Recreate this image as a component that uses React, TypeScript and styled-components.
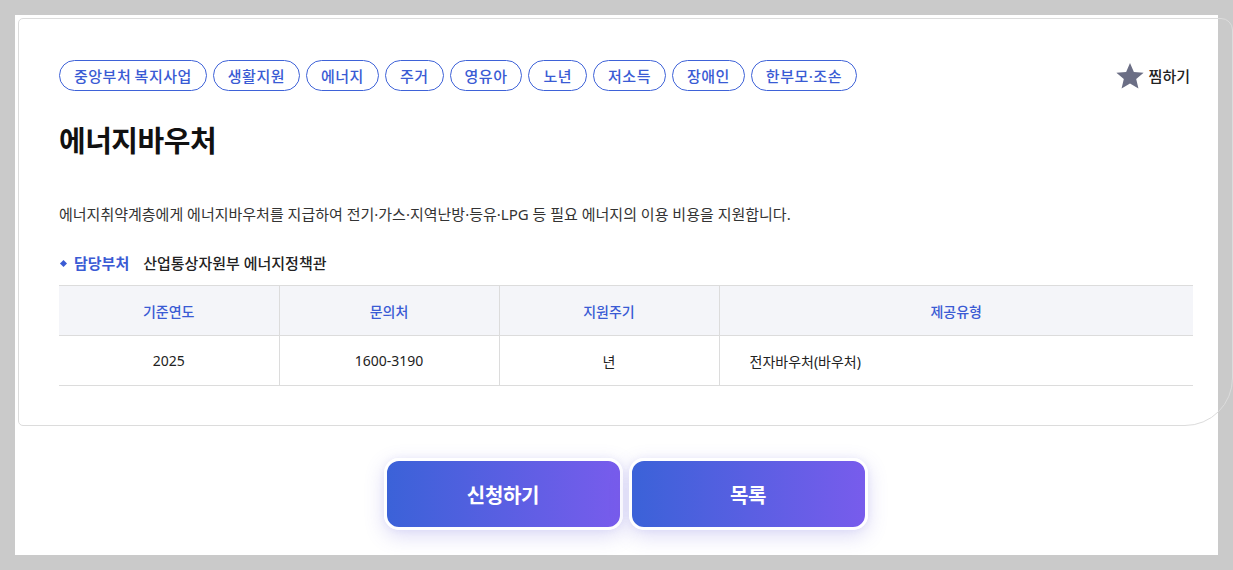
import React from "react";
import styled, { createGlobalStyle } from "styled-components";

const Global = createGlobalStyle`
  html, body { margin: 0; padding: 0; }
  body {
    background: #cacaca;
    font-family: "Noto Sans", "Noto Sans CJK KR", sans-serif;
    color: #222;
    overflow: hidden;
  }
`;

const Screen = styled.div`
  padding: 15px;
  width: 1233px;
  height: 570px;
  box-sizing: border-box;
`;

const Page = styled.div`
  width: 1203px;
  height: 540px;
  background: #fff;
  padding: 3px;
  box-sizing: border-box;
  display: flex;
  flex-direction: column;
`;

const Card = styled.section`
  width: 1215px;
  height: 408px;
  box-sizing: border-box;
  border: 1px solid #dcdcdc;
  border-radius: 5px 12px 48px 5px;
  padding: 41px 40px 0 40px;
  flex-shrink: 0;
`;

const TopRow = styled.div`
  display: flex;
  align-items: center;
  justify-content: space-between;
  width: 1134px;
`;

const Tags = styled.ul`
  display: flex;
  gap: 6px;
  margin: 0;
  padding: 0;
  list-style: none;
`;

const Tag = styled.li`
  height: 31px;
  box-sizing: border-box;
  border: 1px solid #3e62d8;
  border-radius: 16px;
  padding: 0 14px;
  display: flex;
  align-items: center;
  font-size: 15px;
  font-weight: 500;
  color: #3a5bd4;
  letter-spacing: 0.5px;
  word-spacing: -1px;
`;

const Wish = styled.button`
  display: flex;
  align-items: center;
  gap: 4px;
  border: none;
  background: none;
  padding: 0;
  margin-right: 3px;
  font-family: inherit;
  font-size: 15px;
  font-weight: 500;
  color: #222;
  cursor: pointer;
`;

const Title = styled.h1`
  margin: 30px 0 0;
  font-size: 29px;
  font-weight: 700;
  color: #111;
  letter-spacing: -0.5px;
  line-height: 40px;
`;

const Desc = styled.p`
  margin: 42px 0 0;
  font-size: 15px;
  color: #333;
  line-height: 22px;
  letter-spacing: 0;
`;

const Dept = styled.div`
  display: flex;
  align-items: center;
  margin-top: 27px;
  font-size: 15px;
  line-height: 22px;
`;

const DeptLabel = styled.span`
  display: flex;
  align-items: center;
  gap: 8px;
  font-weight: 700;
  color: #3a5bd4;
  margin-right: 14px;
  &::before {
    content: "";
    width: 5px;
    height: 5px;
    background: #3a5bd4;
    transform: rotate(45deg);
    margin-left: 2px;
  }
`;

const DeptValue = styled.span`
  font-weight: 500;
  color: #222;
`;

const Table = styled.table`
  margin-top: 11px;
  width: 1134px;
  border-collapse: collapse;
  table-layout: fixed;
  font-size: 14px;
`;

const Col = styled.col<{ $w?: number }>`
  width: ${(p) => (p.$w ? `${p.$w}px` : "auto")};
`;

const Th = styled.th`
  padding: 0;
  height: 49px;
  background: #f4f5f9;
  color: #3a5bd4;
  font-weight: 500;
  border-top: 1px solid #dcdcdc;
  border-bottom: 1px solid #dcdcdc;
  border-right: 1px solid #dcdcdc;
  &:last-child { border-right: none; }
`;

const Td = styled.td<{ $left?: boolean }>`
  height: 49px;
  text-align: ${(p) => (p.$left ? "left" : "center")};
  padding: ${(p) => (p.$left ? "0 0 0 30px" : "0")};
  color: #222;
  font-weight: 400;
  border-bottom: 1px solid #dcdcdc;
  border-right: 1px solid #dcdcdc;
  &:last-child { border-right: none; }
`;

const Actions = styled.div`
  width: 1215px;
  display: flex;
  justify-content: center;
  gap: 6px;
  margin-top: 32px;
`;

const Action = styled.button`
  width: 239px;
  height: 72px;
  box-sizing: border-box;
  border: 3px solid #fff;
  border-radius: 15px;
  background: linear-gradient(90deg, #3b62d8 0%, #785cec 100%);
  box-shadow: 0 6px 20px rgba(95, 85, 215, 0.22), 0 0 6px rgba(95, 85, 215, 0.08);
  color: #fff;
  font-family: inherit;
  font-size: 20px;
  font-weight: 700;
  letter-spacing: -0.3px;
  cursor: pointer;
`;

const StarIcon = () => (
  <svg width="30" height="30" viewBox="0 0 24 24" aria-hidden="true">
    <path
      d="M12 1.5l3.1 7.2 7.8.65-5.95 5.1 1.8 7.6L12 18l-6.75 4.05 1.8-7.6L1.1 9.35l7.8-.65z"
      fill="#6b6e85"
    />
  </svg>
);

const tags = ["중앙부처 복지사업", "생활지원", "에너지", "주거", "영유아", "노년", "저소득", "장애인", "한부모·조손"];

export default function App() {
  return (
    <>
      <Global />
      <Screen>
        <Page>
          <Card>
            <TopRow>
              <Tags>
                {tags.map((t) => (
                  <Tag key={t}>{t}</Tag>
                ))}
              </Tags>
              <Wish>
                <StarIcon />
                찜하기
              </Wish>
            </TopRow>
            <Title>에너지바우처</Title>
            <Desc>
              에너지취약계층에게 에너지바우처를 지급하여 전기·가스·지역난방·등유·LPG 등 필요 에너지의 이용 비용을 지원합니다.
            </Desc>
            <Dept>
              <DeptLabel>담당부처</DeptLabel>
              <DeptValue>산업통상자원부 에너지정책관</DeptValue>
            </Dept>
            <Table>
              <colgroup>
                <Col $w={220} />
                <Col $w={220} />
                <Col $w={220} />
                <Col />
              </colgroup>
              <thead>
                <tr>
                  <Th>기준연도</Th>
                  <Th>문의처</Th>
                  <Th>지원주기</Th>
                  <Th>제공유형</Th>
                </tr>
              </thead>
              <tbody>
                <tr>
                  <Td>2025</Td>
                  <Td>1600-3190</Td>
                  <Td>년</Td>
                  <Td $left>전자바우처(바우처)</Td>
                </tr>
              </tbody>
            </Table>
          </Card>
          <Actions>
            <Action>신청하기</Action>
            <Action>목록</Action>
          </Actions>
        </Page>
      </Screen>
    </>
  );
}
